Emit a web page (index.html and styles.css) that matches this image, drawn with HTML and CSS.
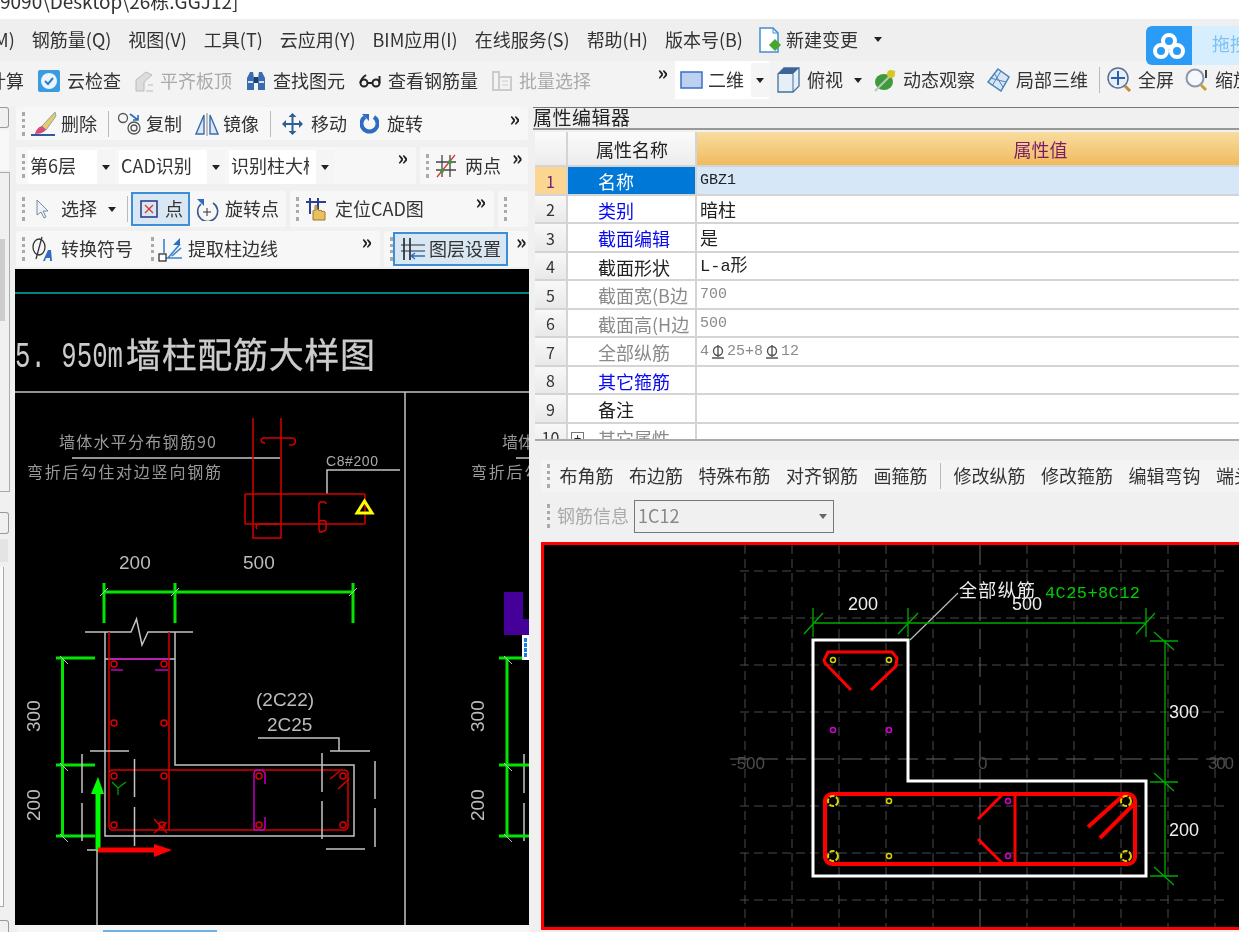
FILE: index.html
```html
<!DOCTYPE html>
<html lang="zh-CN">
<head>
<meta charset="UTF-8">
<title>26栋.GGJ12</title>
<link rel="stylesheet" href="styles.css">
</head>
<body>
<div class="app">
	<div class="title"><span>9090\Desktop\26栋.GGJ12]</span></div>

	<div class="menu">
		<span>(M)</span><span>钢筋量(Q)</span><span>视图(V)</span><span>工具(T)</span><span>云应用(Y)</span><span>BIM应用(I)</span><span>在线服务(S)</span><span>帮助(H)</span><span>版本号(B)</span>
		<span class="tool tool-new">
			<svg class="ic" width="24" height="28" viewBox="0 0 24 28"><path d="M2 2h13l5 5v19H2z" fill="#fff" stroke="#3f8fd0" stroke-width="1.5"/><path d="M15 2v5h5" fill="none" stroke="#3f8fd0"/><path d="M17 13l6 6-6 6-6-6z" fill="#4aa52e"/></svg>
			<span>新建变更</span>
		</span>
		<i class="caret caret-menu"></i>
	</div>

	<div class="cloud">
		<div class="cloud-logo">
			<svg width="34" height="30" viewBox="0 0 34 30"><g fill="none" stroke="#fff" stroke-width="4"><circle cx="17" cy="10" r="6"/><circle cx="9" cy="20" r="6"/><circle cx="25" cy="20" r="6"/></g></svg>
		</div>
		<div class="cloud-text">拖拽</div>
	</div>

	<div class="bar2">
		<div class="bar2-a">
			<span>计算</span>
			<span class="tool">
				<svg class="ic" width="24" height="24" viewBox="0 0 24 24"><rect x="1" y="1" width="22" height="22" rx="2" fill="#3b9be0"/><circle cx="12" cy="12" r="8" fill="#eaf5fd"/><path d="M8 12l3 3 5-6" fill="none" stroke="#2a80c8" stroke-width="2"/></svg>
				<span>云检查</span>
			</span>
			<span class="tool off">
				<svg class="ic" width="20" height="24" viewBox="0 0 20 24"><path d="M2 22V11l10-8 6 3-8 7v9z" fill="#ddd" stroke="#bbb"/><path d="M12 22h7M14 16h5" stroke="#bbb"/></svg>
				<span>平齐板顶</span>
			</span>
			<span class="tool">
				<svg class="ic" width="22" height="24" viewBox="0 0 22 24"><path d="M2 21V9l3-6h3l1 6v12zM13 21V9l1-6h3l3 6v12z" fill="#3c6cb0"/><path d="M9 8h4v6H9z" fill="#1d3c70"/><path d="M3 13h5M14 13h5" stroke="#cfe0f4" stroke-width="2"/></svg>
				<span>查找图元</span>
			</span>
			<span class="tool">
				<svg class="ic" width="24" height="20" viewBox="0 0 24 20"><g fill="none" stroke="#222" stroke-width="2"><circle cx="6" cy="12" r="3.500"/><circle cx="18" cy="12" r="3.500"/><path d="M8 4C5 6 2.500 9 2.500 12M21.500 5v7M9.500 12h5"/></g></svg>
				<span>查看钢筋量</span>
			</span>
			<span class="tool off">
				<svg class="ic" width="22" height="24" viewBox="0 0 22 24"><path d="M2 3h6v18H2zM8 8h12v13H8z" fill="none" stroke="#ccc" stroke-width="2"/><path d="M11 12h6M11 16h6" stroke="#ccc"/></svg>
				<span>批量选择</span>
			</span>
			<b class="more">»</b>
		</div>
		<div class="bar2-b">
			<span class="combo2">
				<svg class="ic" width="23" height="18" viewBox="0 0 23 18"><rect x="1" y="1" width="21" height="16" fill="#bcd0f2" stroke="#3a6fc4" stroke-width="1.5"/></svg>
				<span>二维</span>
				<span class="combo-arrow"><i class="caret"></i></span>
			</span>
			<span class="tool tool-top">
				<svg class="ic" width="25" height="28" viewBox="0 0 25 28"><path d="M2 8l6-6h15v18l-6 6H2z" fill="#e6eff8" stroke="#456f9c" stroke-width="1.3"/><path d="M2 8h15l6-6H8z" fill="#3c6494"/><path d="M17 8v18" stroke="#456f9c"/></svg>
				<span>俯视</span>
			</span>
			<i class="caret"></i>
			<span class="tool">
				<svg class="ic" width="24" height="26" viewBox="0 0 24 26"><ellipse cx="11" cy="15" rx="9" ry="8" fill="#3f9a3c"/><path d="M2 24L22 4" stroke="#b9c9b9" stroke-width="2"/><circle cx="18" cy="7" r="4" fill="#d8c628"/></svg>
				<span>动态观察</span>
			</span>
			<span class="tool">
				<svg class="ic" width="24" height="24" viewBox="0 0 24 24"><path d="M12 1l11 8-8 14L2 14z" fill="#d6e6f6" stroke="#4d82b8" stroke-width="1.5"/><path d="M8 5l9 14M15 3L6 18M4 10l16 4" stroke="#4d82b8"/></svg>
				<span>局部三维</span>
			</span>
			<i class="sep sep-full"></i>
			<span class="tool">
				<svg class="ic" width="25" height="26" viewBox="0 0 25 26"><circle cx="11" cy="11" r="10" fill="#e8eef8" stroke="#5a6f96" stroke-width="1.5"/><path d="M11 4v14M4 11h14" stroke="#2c5fa8" stroke-width="2"/><path d="M18 19l5 5" stroke="#c8882e" stroke-width="3"/></svg>
				<span>全屏</span>
			</span>
			<span class="tool">
				<svg class="ic" width="24" height="26" viewBox="0 0 24 26"><circle cx="10" cy="11" r="8.5" fill="#f4f7fb" stroke="#8a97a8" stroke-width="2"/><path d="M16 18l5 5" stroke="#c8a02e" stroke-width="3"/><path d="M21 3v8" stroke="#444" stroke-width="2"/></svg>
				<span>缩放</span>
			</span>
		</div>
	</div>

	<div class="work">
		<div class="side">
			<div class="side-btn"></div>
			<div class="side-white"></div>
			<div class="side-panel"><div class="side-thumb"></div></div>
			<div class="side-btn side-btn2"></div>
			<div class="side-grey"></div>
			<div class="side-box"></div>
			<div class="side-btn side-btn3"></div>
		</div>

		<div class="left">
			<div class="row row-a">
				<div class="grp grow">
					<i class="grip"></i>
					<span class="tool">
						<svg class="ic" width="27" height="26" viewBox="0 0 27 26"><path d="M25 1L12 15l4 4L26 5z" fill="#e8c868" stroke="#8aa"/><path d="M12 15c-4 1-6 4-7 8 4 0 8-1 11-4z" fill="#d84a7c"/><path d="M1 24h24" stroke="#2c5c9c" stroke-width="2"/></svg>
						<span>删除</span>
					</span>
					<i class="sep"></i>
					<span class="tool">
						<svg class="ic" width="25" height="26" viewBox="0 0 25 26"><g fill="none" stroke="#555" stroke-width="1.3"><circle cx="6" cy="7" r="4.5"/><circle cx="17" cy="17" r="6"/><circle cx="17" cy="17" r="3"/></g><path d="M13 3l8 6M21 4v5h-5" fill="none" stroke="#2c6cb8" stroke-width="1.6"/></svg>
						<span>复制</span>
					</span>
					<span class="tool">
						<svg class="ic" width="24" height="24" viewBox="0 0 24 24"><path d="M9 3L1 22h8zM15 3l8 19h-8z" fill="#dbe8f6" stroke="#3d6cab" stroke-width="1.4"/><path d="M12 1v23" stroke="#888"/></svg>
						<span>镜像</span>
					</span>
					<i class="sep"></i>
					<span class="tool tool-wide">
						<svg class="ic" width="21" height="22" viewBox="0 0 21 22"><path d="M10.500 1v20M1 11h19" stroke="#2d5f94" stroke-width="2"/><path d="M10.500 0l4 4h-8zM10.500 22l4-4h-8zM0 11l4-4v8zM21 11l-4-4v8z" fill="#2d5f94"/></svg>
						<span>移动</span>
					</span>
					<span class="tool tool-wide">
						<svg class="ic" width="19" height="20" viewBox="0 0 19 20"><path d="M5 3a8 8 0 1 0 9 0" fill="none" stroke="#2d6cc0" stroke-width="4"/><path d="M2 0h7v7z" fill="#2d6cc0"/></svg>
						<span>旋转</span>
					</span>
					<b class="more">»</b>
				</div>
			</div>

			<div class="row row-b">
				<div class="grp grp-b1">
					<i class="grip"></i>
					<span class="combo combo-1"><span class="combo-text">第6层</span><span class="combo-arrow"><i class="caret"></i></span></span>
					<span class="combo combo-2"><span class="combo-text">CAD识别</span><span class="combo-arrow"><i class="caret"></i></span></span>
					<span class="combo combo-3"><span class="combo-text">识别柱大样</span><span class="combo-arrow"><i class="caret"></i></span></span>
					<b class="more">»</b>
				</div>
				<div class="grp grow">
					<i class="grip"></i>
					<span class="tool tool-wide">
						<svg class="ic" width="22" height="24" viewBox="0 0 22 24"><path d="M7 1v22M15 1v22M1 8h20M1 16h20" stroke="#444" stroke-width="1.300"/><path d="M2 23L20 1" stroke="#d8362e" stroke-width="1.300"/><circle cx="7" cy="17" r="2" fill="#3a9a3a"/><circle cx="15" cy="8" r="2" fill="#3a9a3a"/></svg>
						<span>两点</span>
					</span>
					<b class="more">»</b>
				</div>
			</div>

			<div class="row row-c">
				<div class="grp grp-c1">
					<i class="grip"></i>
					<span class="tool tool-select">
						<svg class="ic" width="15" height="20" viewBox="0 0 15 20"><path d="M2 1v15l4-3 3 6 2-1-3-6h5z" fill="#eef3fa" stroke="#7c8aa0"/></svg>
						<span>选择</span>
					</span>
					<i class="caret"></i>
					<i class="sep"></i>
					<span class="tool tool-on tool-point">
						<svg class="ic" width="18" height="18" viewBox="0 0 18 18"><rect x="1" y="1" width="16" height="16" fill="none" stroke="#2f3f8f" stroke-width="1.600"/><path d="M5 5l8 8M13 5l-8 8" stroke="#d8362e" stroke-width="1.300"/></svg>
						<span>点</span>
					</span>
					<span class="tool">
						<svg class="ic" width="24" height="24" viewBox="0 0 24 24"><path d="M6 7a10 10 0 1 0 12-1" fill="none" stroke="#3a5c8c" stroke-width="1.600"/><path d="M12 11v8M8 15h8" stroke="#333"/><path d="M2 2h7v7z" fill="#2d6cc0"/></svg>
						<span>旋转点</span>
					</span>
				</div>
				<div class="grp grp-c2">
					<i class="grip"></i>
					<span class="tool">
						<svg class="ic" width="24" height="24" viewBox="0 0 24 24"><path d="M1 5h20M5 1v16M13 1v14" stroke="#2f3f8f" stroke-width="2"/><path d="M8 23v-9c0-1 2-1 2 0V9c0-1 2-1 2 0v4c0-1 2-1 2 0v1c0-1 3-1 3 0v1c0-1 3-1 3 0v8z" fill="#e8c060" stroke="#a07828"/></svg>
						<span>定位CAD图</span>
					</span>
					<b class="more">»</b>
				</div>
				<div class="grp grp-c3"><i class="grip"></i></div>
			</div>

			<div class="row row-d">
				<div class="grp grp-d1">
					<i class="grip"></i>
					<span class="tool">
						<svg class="ic" width="24" height="26" viewBox="0 0 24 26"><ellipse cx="8" cy="11" rx="6" ry="8" fill="none" stroke="#333" stroke-width="1.300"/><path d="M11 1L5 23" stroke="#333" stroke-width="1.300"/><path d="M12 25l5-11h3l1 11h-2v-3h-4l-1 3z" fill="#2d6cc0"/></svg>
						<span>转换符号</span>
					</span>
				</div>
				<div class="grp grp-d2">
					<i class="grip"></i>
					<span class="tool">
						<svg class="ic" width="24" height="26" viewBox="0 0 24 26"><path d="M6 3v14M3 22h21M10 22L22 8M14 20L23 12" stroke="#3d82cc" stroke-width="1.600"/><path d="M15 9l7-7v7z" fill="#2d6cc0"/><rect x="1" y="18" width="7" height="7" fill="#fff" stroke="#333" stroke-width="1.300"/></svg>
						<span>提取柱边线</span>
					</span>
					<b class="more">»</b>
				</div>
				<div class="grp grow">
					<i class="grip"></i>
					<span class="tool tool-on tool-layer">
						<svg class="ic" width="25" height="24" viewBox="0 0 25 24"><path d="M4 1v22M10 1v22" stroke="#222" stroke-width="1.600"/><path d="M1 8h24M1 14h24" stroke="#234"/><path d="M11 19h14M11 19l4-3M11 19l4 3" fill="none" stroke="#2d6cc0" stroke-width="1.400"/></svg>
						<span>图层设置</span>
					</span>
					<b class="more">»</b>
				</div>
			</div>

			<svg class="cad-left" width="514" height="656" viewBox="15 269 514 656">
				<rect x="15" y="269" width="514" height="656" fill="#000"/>
				<path d="M15 293H529" stroke="#00b0b0" stroke-width="1.500"/>
				<text class="cad c-title" x="15" y="367" textLength="108" lengthAdjust="spacingAndGlyphs">5. 950m</text>
				<text class="cad c-title2" x="126" y="368" textLength="249">墙柱配筋大样图</text>
				<path class="ln" d="M15 392H529M405 392V925"/>

				<!-- 上面的节点 -->
				<text class="cad c-note" x="59" y="448" textLength="157">墙体水平分布钢筋90</text>
				<text class="cad c-note" x="27" y="478" textLength="194">弯折后勾住对边竖向钢筋</text>
				<path class="ln" d="M72 458H280M327 494V470H400"/>
				<text class="cad c-small" x="326" y="466" textLength="52">C8#200</text>
				<g class="rd">
					<path d="M253 418V538H281V418M265 443c-5 0-5-5-1-5h28c5 0 5 8-3 7M257 529c-2-3 0-5 2-5h20"/>
					<rect x="245" y="494" width="120" height="30" rx="1"/>
					<path d="M322 532c-3 0-3-1-3-4V504c0-3 7-3 7 0M319 522c0-2 7-2 7 0v7c0 2-4 3-7 3"/>
				</g>
				<path d="M364.500 501L372 513H357z" fill="none" stroke="#ff0" stroke-width="3"/>

				<text class="cad c-dim" x="119" y="569">200</text>
				<text class="cad c-dim" x="243" y="569">500</text>
				<g class="gr">
					<path d="M104 592H353M104 583V623M175 583V623M353 583V623M62.500 658V836M56 658H95M56 765H95M56 836H95"/>
				</g>
				<path class="ln ln-thin" d="M100 596L108 588M171 596L179 588M349 596L357 588M60 656L68 664M60 763L68 771M60 834L68 842"/>

				<!-- L形柱 -->
				<path class="ln" d="M85 632H131L136.500 619 142 645 148 632H193M105 632V836H354V765H175V632M105 659H175"/>
				<g class="rd">
					<path d="M109 632V826Q109 830 113 830H344Q348 830 348 826V774Q348 770 344 770H113Q109 770 109 774M169 632V830"/>
					<path d="M330 779L340 771M338 789L349 779M154 819L167 833M154 833L167 822"/>
					<circle cx="114" cy="664" r="3"/><circle cx="164" cy="664" r="3"/>
					<circle cx="114" cy="723" r="3"/><circle cx="164" cy="723" r="3"/>
					<circle cx="114" cy="776" r="3"/><circle cx="164" cy="776" r="3"/>
					<circle cx="114" cy="825" r="3"/><circle cx="162" cy="825" r="3"/>
					<circle cx="259" cy="776" r="3"/><circle cx="259" cy="825" r="3"/>
					<circle cx="343" cy="776" r="3"/><circle cx="343" cy="825" r="3"/>
				</g>
				<path class="mg" d="M110 659H169M111 670H123M155 670H168M254 830V774Q254 770 258 770H262L265 773V784M254 830H262Q265 830 265 826V817"/>
				<path class="ln" d="M90 751H129M82 754V793M82 803V841M134.500 759V797M134.500 807V846M322 753V792M322 801V839M375 761V799M375 808V847M326 849H365M330 751H370M258 738H339V751M87 850H98M97 850V925"/>
				<text class="cad c-dim" x="256" y="706">(2C22)</text>
				<text class="cad c-dim" x="267" y="731">2C25</text>
				<text class="cad c-dim" transform="translate(40 732) rotate(-90)">300</text>
				<text class="cad c-dim" transform="translate(40 821) rotate(-90)">200</text>

				<path d="M112 782L118 788 126 782M118 788V795" fill="none" stroke="#0a0" stroke-width="1.200"/>
				<path d="M98 850V790" stroke="#0f0" stroke-width="5"/>
				<path d="M98 777L104 794H91z" fill="#0f0"/>
				<path d="M98 850H156" stroke="#f00" stroke-width="5"/>
				<path d="M172 850L154 844V857z" fill="#f00"/>

				<!-- 右边被遮住的节点 -->
				<text class="cad c-note" x="502" y="448">墙体水平</text>
				<text class="cad c-note" x="471" y="478" textLength="194">弯折后勾住对边竖向钢筋</text>
				<path class="ln" d="M516 458H529M524 754V793M524 803V841"/>
				<path d="M504 592H523V619H529V635H504z" fill="#440099"/>
				<rect x="522" y="635" width="7" height="25" fill="#fff"/>
				<path d="M525.500 638V657" stroke="#1a80e0" stroke-width="3" stroke-dasharray="4 1"/>
				<path class="gr" d="M507 658V836M499 658H522M499 765H529M499 836H529"/>
				<path class="ln ln-thin" d="M504 656L512 664M504 763L512 771M504 834L512 842"/>
				<text class="cad c-dim" transform="translate(484 732) rotate(-90)">300</text>
				<text class="cad c-dim" transform="translate(484 821) rotate(-90)">200</text>
			</svg>
			<div class="tabs"><i class="tab-on"></i></div>
		</div>

		<div class="right">
			<div class="prop-title">属性编辑器</div>
			<div class="prop">
				<div class="c idx hd"></div><div class="c name hd">属性名称</div><div class="c val val-hd">属性值</div>

				<div class="c idx idx-on">1</div><div class="c name name-on">名称</div><div class="c val val-on mono">GBZ1</div>
				<div class="c idx">2</div><div class="c name blue">类别</div><div class="c val">暗柱</div>
				<div class="c idx">3</div><div class="c name blue">截面编辑</div><div class="c val">是</div>
				<div class="c idx">4</div><div class="c name">截面形状</div><div class="c val mono mono-big">L-a形</div>
				<div class="c idx">5</div><div class="c name grey">截面宽(B边</div><div class="c val mono grey">700</div>
				<div class="c idx">6</div><div class="c name grey">截面高(H边</div><div class="c val mono grey">500</div>
				<div class="c idx">7</div><div class="c name grey">全部纵筋</div>
				<div class="c val mono grey">4<svg class="steel" width="14" height="14" viewBox="0 0 14 14"><circle cx="7" cy="6" r="4.500" fill="none" stroke="#555" stroke-width="1.400"/><path d="M7 0v12M1 13h12" stroke="#555" stroke-width="1.400"/></svg>25+8<svg class="steel" width="14" height="14" viewBox="0 0 14 14"><circle cx="7" cy="6" r="4.500" fill="none" stroke="#555" stroke-width="1.400"/><path d="M7 0v12M1 13h12" stroke="#555" stroke-width="1.400"/></svg>12</div>
				<div class="c idx">8</div><div class="c name blue">其它箍筋</div><div class="c val"></div>
				<div class="c idx">9</div><div class="c name">备注</div><div class="c val"></div>
				<div class="c idx">10</div><div class="c name name-tree grey"><i class="plus">+</i>其它属性</div><div class="c val"></div>
			</div>

			<div class="rbar">
				<i class="grip"></i>
				<span>布角筋</span><span>布边筋</span><span>特殊布筋</span><span>对齐钢筋</span><span>画箍筋</span>
				<i class="sep sep-tight"></i>
				<span>修改纵筋</span><span>修改箍筋</span><span>编辑弯钩</span><span>端头</span>
			</div>
			<div class="rinfo">
				<i class="grip"></i>
				<span class="off">钢筋信息</span>
				<div class="select"><span>1C12</span><i class="caret"></i></div>
			</div>

			<div class="frame">
				<svg class="cad-right" width="714" height="382" viewBox="544 545 714 382">
					<path class="grid" d="M740 571H1224M740 618H1224M740 665H1224M740 712H1224M740 806H1224M740 853H1224M740 900H1224M745 545V927M792 545V927M839 545V927M886 545V927M933 545V927M1027 545V927M1074 545V927M1121 545V927M1168 545V927M1215 545V927"/>
					<path class="grid grid-c" d="M730 759H1234M980 545V927"/>
					<text class="cad c-axis" x="731" y="769" textLength="34">-500</text>
					<text class="cad c-axis" x="978" y="769">0</text>
					<text class="cad c-axis" x="1208" y="769" textLength="26">300</text>

					<path d="M813 640H908V781H1146V876H813z" fill="none" stroke="#fff" stroke-width="3"/>
					<path d="M910 640L958 593" stroke="#bbb" stroke-width="1.200"/>
					<text class="cad c-white" x="959" y="597" textLength="76">全部纵筋</text>
					<text class="cad c-green" x="1045" y="598" textLength="95">4C25+8C12</text>
					<text class="cad c-white" x="848" y="610">200</text>
					<text class="cad c-white" x="1012" y="610">500</text>
					<text class="cad c-white" x="1169" y="718">300</text>
					<text class="cad c-white" x="1169" y="836">200</text>

					<path class="gr2" d="M813 623H1146M813 608V637M908 608V637M1146 608V637M804 634L823 613M898 634L918 613M1136 634L1155 613M1165 641V876M1150 641H1178M1150 782H1178M1150 876H1178M1154 632L1174 650M1154 773L1174 791M1154 867L1174 885"/>

					<g class="rb">
						<path d="M851 690L825 663 824 660 828 652H892L897 658 896 666 871 690"/>
						<rect class="rb-big" x="825" y="794" width="310" height="70" rx="7"/>
						<path class="rb-big" d="M1088 827L1126 793M1100 838L1135 803"/>
						<path d="M1015 794V864M978 819L1002 795M978 839L1002 863"/>
					</g>
					<g class="yl">
						<circle cx="833" cy="660" r="2.500"/><circle cx="889" cy="660" r="2.500"/>
						<circle cx="889" cy="801" r="2.500"/><circle cx="889" cy="856" r="2.500"/>
						<circle class="yl-big" cx="833" cy="801" r="5"/><circle class="yl-big" cx="1126" cy="801" r="5"/>
						<circle class="yl-big" cx="833" cy="856" r="5"/><circle class="yl-big" cx="1126" cy="856" r="5"/>
					</g>
					<g class="mgc">
						<circle cx="833" cy="730" r="2.500"/><circle cx="889" cy="730" r="2.500"/>
						<circle cx="1008" cy="801" r="2.500"/><circle cx="1008" cy="856" r="2.500"/>
					</g>
				</svg>
			</div>
		</div>
	</div>
</div>
</body>
</html>
```

FILE: styles.css
```css
html, body {
	margin: 0;
	padding: 0;
	height: 100%;
	overflow: hidden;
	background: #fff;
}
body {
	font: 18px/1.2 "Noto Sans CJK SC", "Noto Sans", sans-serif;
	color: #333;
}
i {
	font-style: normal;
}
svg {
	display: block;
	flex: none;
}

.app {
	position: relative;
	width: 1239px;
	height: 932px;
	overflow: hidden;
	filter: blur(.45px);
}

/* 顶部 */
.title {
	height: 19px;
	overflow: hidden;
	background: #fff;
	font-size: 19px;
	line-height: 19px;
	white-space: nowrap;
}
.title span {
	display: block;
	margin-top: -9px;
}
.menu {
	display: flex;
	align-items: center;
	gap: 17px;
	height: 42px;
	padding-bottom: 1px;
	box-sizing: border-box;
	margin-left: -12px;
	width: 1251px;
	background: #efefef;
	white-space: nowrap;
}
.tool {
	display: flex;
	align-items: center;
	gap: 6px;
	white-space: nowrap;
	flex: none;
}
.tool-new {
	gap: 4px;
	margin-left: -2px;
}
.off, .off span {
	color: #aaa;
}
.caret {
	display: block;
	flex: none;
	width: 0;
	height: 0;
	border: 4px solid transparent;
	border-top: 5px solid #222;
	border-bottom: 0;
}
.caret-menu {
	margin-left: -1px;
}
.cloud {
	position: absolute;
	left: 1146px;
	top: 26px;
	display: flex;
	width: 120px;
	height: 39px;
	border-radius: 6px;
	overflow: hidden;
	background: #d7eefe;
}
.cloud-logo {
	display: flex;
	align-items: center;
	justify-content: center;
	width: 46px;
	background: #2a9bf6;
}
.cloud-text {
	padding: 7px 0 0 20px;
	color: #7cc2f6;
}

.bar2 {
	display: flex;
	height: 46px;
	background: #f3f3f3;
	white-space: nowrap;
}
.bar2-a {
	display: flex;
	align-items: center;
	gap: 13px;
	flex: none;
	box-sizing: border-box;
	width: 680px;
	margin-left: -12px;
	margin-right: 7px;
	padding-bottom: 6px;
}
.bar2-b {
	display: flex;
	align-items: center;
	gap: 11px;
	flex: none;
	height: 38px;
}
.combo2 {
	display: flex;
	align-items: center;
	gap: 5px;
	height: 38px;
	padding-left: 5px;
	background: #fff;
}
.combo2 .combo-arrow {
	margin-left: 2px;
	height: 34px;
}
.tool-top {
	margin-left: -4px;
}
.more {
	margin-left: auto;
	align-self: flex-start;
	font-size: 20px;
	line-height: 18px;
	color: #222;
}
.bar2-a .more {
	margin-top: 2px;
}
.sep {
	display: block;
	flex: none;
	width: 1px;
	height: 26px;
	background: #bbb;
}
.sep-full {
	margin-right: -4px;
}

/* 主区域 */
.work {
	display: flex;
	height: 825px;
	background: #f0f0f0;
}
.side {
	flex: none;
	width: 15px;
}
.side-btn {
	box-sizing: border-box;
	width: 9px;
	height: 21px;
	border: 1px solid #999;
	border-left: 0;
	border-radius: 0 3px 3px 0;
}
.side-white {
	width: 9px;
	height: 40px;
	margin-top: 2px;
	background: #f8f8f8;
}
.side-panel {
	box-sizing: border-box;
	width: 10px;
	height: 320px;
	margin-top: 2px;
	padding-top: 66px;
	border-right: 1px solid #aaa;
	border-bottom: 1px solid #aaa;
	border-top: 1px solid #aaa;
}
.side-thumb {
	width: 5px;
	height: 82px;
	background: #ccc;
}
.side-btn2 {
	margin-top: 20px;
	height: 22px;
}
.side-grey {
	width: 8px;
	height: 23px;
	margin-top: 5px;
	background: #e4e4e4;
}
.side-box {
	box-sizing: border-box;
	width: 4px;
	height: 340px;
	margin-top: 5px;
	border-right: 1px solid #aaa;
	border-bottom: 1px solid #aaa;
	background: #fafafa;
}
.side-btn3 {
	margin-top: 13px;
	height: 16px;
}

.left {
	flex: none;
	width: 514px;
}
.row {
	display: flex;
	gap: 4px;
	margin-left: 1px;
	width: 512px;
	white-space: nowrap;
}
.grp {
	display: flex;
	align-items: center;
	gap: 11px;
	box-sizing: border-box;
	padding: 0 8px 0 6px;
	border-radius: 3px;
	background: #f7f7f7;
	overflow: hidden;
	flex: none;
}
.grow {
	flex: 1;
	min-width: 0;
}
.grip {
	display: block;
	flex: none;
	width: 0;
	height: 24px;
	margin-right: -5px;
	border-left: 3px dotted #aaa;
}
.grp .more {
	margin-top: 1px;
}
.row-a {
	height: 33px;
}
.row-a .grp {
	padding-top: 1px;
}
.row-a .grip {
	margin-right: -6px;
}
.row-a .tool {
	gap: 4px;
}
.row-a .sep {
	margin-right: -3px;
}
.row-a .tool + .tool {
	margin-left: 2px;
}
.row-a .tool-wide {
	margin-left: 3px;
}
.row-b {
	height: 37px;
	margin-top: 7px;
}
.row-c {
	height: 36px;
	margin-top: 7px;
}
.row-d {
	height: 36px;
	margin-top: 4px;
}
.tool-wide {
	gap: 8px !important;
}
.tool-select {
	gap: 11px;
	padding-left: 4px;
}
.tool-on {
	align-self: stretch;
	margin: 1px 0;
	padding: 0 5px;
	border: 2px solid #3c8ed8;
	background: #d9e7f3;
}
.tool-point {
	gap: 7px;
	padding: 0 5px 0 7px;
	margin-left: -8px;
	margin-right: -6px;
}
.tool-layer {
	gap: 4px;
	margin-left: -6px;
	margin-right: -3px;
}

.grp-b1 {
	width: 400px;
	gap: 4px;
}
.grp-b1 .grip {
	margin-right: 0;
}
.combo {
	display: flex;
	align-items: center;
	height: 34px;
	margin-top: 3px;
	background: #fff;
	flex: none;
}
.combo-1 {
	width: 87px;
	margin-left: -1px;
}
.combo-2 {
	width: 106px;
}
.combo-3 {
	width: 105px;
}
.combo-text {
	flex: 1;
	min-width: 0;
	overflow: hidden;
	padding: 0 0 3px 2px;
}
.combo-3 .combo-text {
	margin-right: 7px;
}
.combo-arrow {
	display: flex;
	align-items: center;
	justify-content: center;
	flex: none;
	width: 18px;
	height: 100%;
	background: #f5f5f5;
}
.grp-c1 {
	width: 270px;
}
.grp-c2 {
	width: 204px;
}
.grp-c3 {
	flex: 1;
}
.grp-d1 {
	width: 129px;
	padding-right: 0;
	margin-right: -4px;
}
.grp-d2 {
	width: 235px;
	gap: 9px;
}

.cad-left {
	margin-top: 2px;
}
.tabs {
	height: 7px;
	margin-left: 2px;
	background: #f6f6f6;
	overflow: hidden;
}
.tab-on {
	display: block;
	width: 114px;
	height: 2px;
	margin: 5px 0 0 86px;
	background: #6db3e8;
}

/* CAD图 */
.cad {
	font-family: "Liberation Sans", "Noto Sans CJK SC", sans-serif;
}
.c-title {
	font-family: "Liberation Mono", monospace;
	font-size: 36px;
	fill: #ccc;
}
.c-title2 {
	font-family: "Noto Sans CJK SC", sans-serif;
	font-size: 35px;
	fill: #ccc;
	stroke: #ccc;
	stroke-width: .3;
}
.c-note {
	font-family: "Noto Sans CJK SC", sans-serif;
	font-size: 16px;
	fill: #999;
}
.c-small {
	font-size: 14px;
	fill: #aaa;
}
.c-dim {
	font-size: 19px;
	fill: #bbb;
}
.c-axis {
	font-size: 17px;
	fill: #4c4c4c;
}
.c-white {
	font-size: 18px;
	fill: #eee;
}
.c-green {
	font-family: "Liberation Mono", monospace;
	font-size: 17px;
	fill: #0c0;
}
.ln {
	fill: none;
	stroke: #c4c4c4;
	stroke-width: 1.5;
}
.ln-thin {
	stroke-width: 1;
}
.rd {
	fill: none;
	stroke: #d80000;
	stroke-width: 1.5;
}
.gr {
	fill: none;
	stroke: #00e600;
	stroke-width: 3;
}
.mg {
	fill: none;
	stroke: #c000c0;
	stroke-width: 1.5;
}
.gr2 {
	fill: none;
	stroke: #0a0;
	stroke-width: 1.3;
}
.grid {
	fill: none;
	stroke: #4a4a4a;
	stroke-width: 1;
	stroke-dasharray: 9 5;
}
.grid-c {
	stroke: #666;
	stroke-dasharray: 20 8;
}
.rb {
	fill: none;
	stroke: #f00;
	stroke-width: 3;
}
.rb-big {
	stroke-width: 4;
}
.yl {
	fill: none;
	stroke: #d8d000;
	stroke-width: 1.5;
}
.yl-big {
	stroke-width: 2;
	stroke-dasharray: 5 1.500;
}
.mgc {
	fill: none;
	stroke: #d000d0;
	stroke-width: 1.5;
}

/* 属性编辑器 */
.right {
	flex: none;
	width: 900px;
	margin-left: 4px;
}
.prop-title {
	box-sizing: border-box;
	height: 23px;
	border-top: 1px solid #777;
	border-bottom: 2px solid #999;
	font-size: 19px;
	letter-spacing: .5px;
	line-height: 17px;
	color: #222;
	white-space: nowrap;
}
.prop {
	display: grid;
	grid-template-columns: 33px 129px 686px;
	grid-template-rows: 35px repeat(10, 28.5px);
	box-sizing: border-box;
	width: 850px;
	height: 309px;
	margin: 2px 0 0 2px;
	overflow: hidden;
	background: #fff;
	border-bottom: 2px solid #aaa;
}
.c {
	box-sizing: border-box;
	display: flex;
	align-items: center;
	padding-top: 2px;
	border-bottom: 2px solid #d4d4d4;
	border-right: 2px solid #d4d4d4;
	white-space: nowrap;
	overflow: hidden;
}
.idx {
	justify-content: center;
	background: linear-gradient(#f8f8f8, #e9e9e9);
	font-size: 16px;
	color: #333;
}
.idx-on {
	background: #fbd592;
	color: #702070;
}
.hd {
	background: linear-gradient(#fbfbfb, #ececec);
}
.name {
	padding-top: 4px;
	padding-left: 30px;
	color: #222;
}
.name.hd {
	padding-top: 2px;
	padding-left: 28px;
}
.name-on {
	background: #0078d7;
	color: #fff;
}
.blue {
	color: #0a0af0;
}
.grey {
	color: #8a8a8a;
}
.name-tree {
	padding-left: 3px;
}
.plus {
	display: block;
	box-sizing: border-box;
	width: 13px;
	height: 13px;
	margin-right: 14px;
	border: 1px solid #777;
	font-size: 13px;
	line-height: 10px;
	text-align: center;
	color: #222;
}
.val {
	padding-left: 3px;
	color: #222;
}
.val-hd {
	justify-content: center;
	background: linear-gradient(#f9dca0, #efbb5e);
	color: #7b1c6b;
}
.val-on {
	background: #d6e8f7;
}
.mono {
	font-family: "Liberation Mono", "Noto Sans CJK SC", monospace;
	font-size: 15px;
}
.mono-big {
	font-size: 17px;
}
.grey.mono {
	color: #8a8a8a;
}
.steel {
	margin: 0 2px;
}
.rbar {
	display: flex;
	align-items: center;
	gap: 15.5px;
	height: 32px;
	margin-top: 19px;
	margin-left: 8px;
	padding-left: 6px;
	background: #f4f4f4;
	white-space: nowrap;
}
.rbar .sep-tight {
	margin: 0 -3px;
}
.rbar .grip {
	margin-right: -6px;
}
.rinfo {
	display: flex;
	align-items: center;
	gap: 4px;
	height: 38px;
	margin-top: 5px;
	margin-left: 8px;
	padding-left: 6px;
	white-space: nowrap;
}
.rinfo .grip {
	margin-right: 3px;
}
.select {
	display: flex;
	align-items: center;
	justify-content: space-between;
	box-sizing: border-box;
	width: 200px;
	height: 33px;
	margin-left: 1px;
	padding: 0 6px 0 3px;
	border: 1px solid #777;
	color: #888;
}
.select .caret {
	border-top-color: #666;
}
.frame {
	box-sizing: border-box;
	width: 720px;
	height: 388px;
	margin: 7px 0 0 8px;
	border: 3px solid #f00;
	background: #000;
}
```
